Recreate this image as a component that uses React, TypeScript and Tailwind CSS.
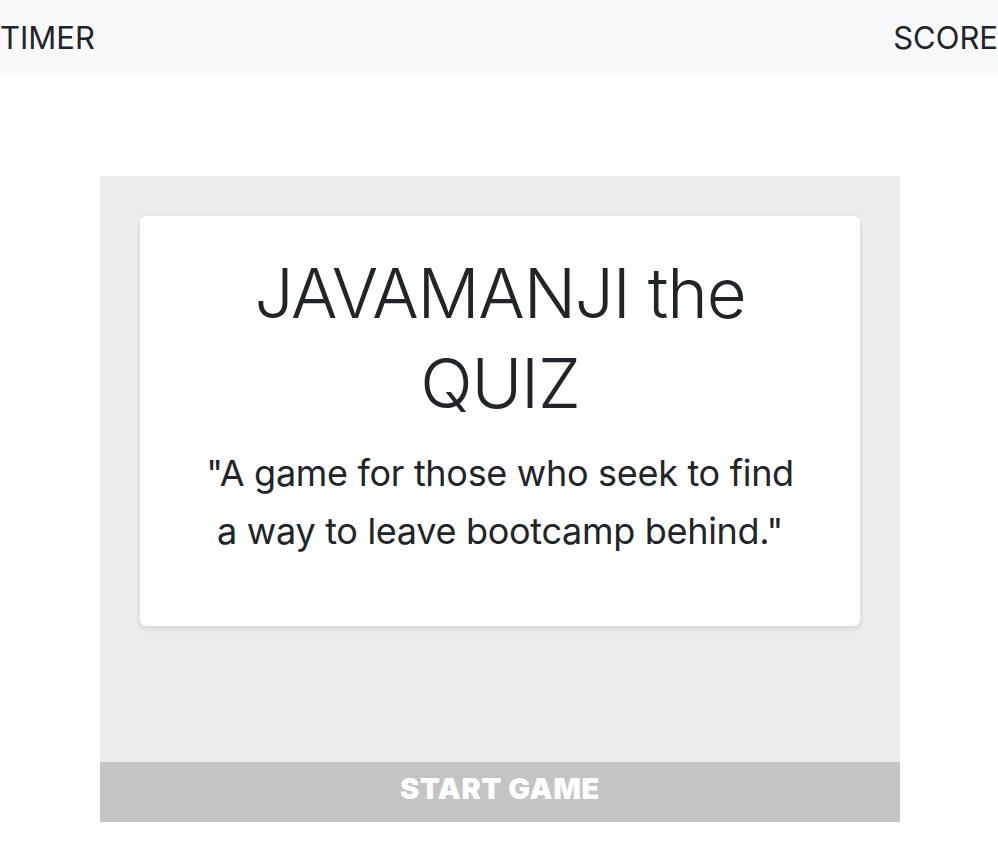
import React from "react";

export default function App() {
  return (
    <div className="min-h-[864px] bg-white text-[#212529]" style={{ fontFamily: "Inter, 'Noto Sans', sans-serif" }}>
      <nav className="flex h-[75px] items-center justify-between bg-[#f8f9fa]">
        <span className="text-[31px] leading-none">TIMER</span>
        <span className="text-[31px] leading-none">SCORE</span>
      </nav>
      <div className="ml-[100px] mt-[101px] flex w-[800px] flex-col bg-[#ececec]">
        <div className="px-10 pt-10 pb-[136px]">
          <div className="rounded-md bg-white px-[60px] pt-[32px] pb-[66px] text-center shadow-[0_2px_6px_rgba(0,0,0,0.12)]">
            <h1 className="text-[69px] font-light leading-[90px] tracking-[-1.2px]">JAVAMANJI the QUIZ</h1>
            <p className="mt-[16px] text-[36px] font-normal leading-[58px] tracking-[-0.3px]">
              "A game for those who seek to find a way to leave bootcamp behind."
            </p>
          </div>
        </div>
        <button className="flex h-[60px] w-full items-center justify-center bg-[#c4c4c4] pb-[6px] text-[29px] font-black tracking-[0.6px] text-white">
          START GAME
        </button>
      </div>
    </div>
  );
}
